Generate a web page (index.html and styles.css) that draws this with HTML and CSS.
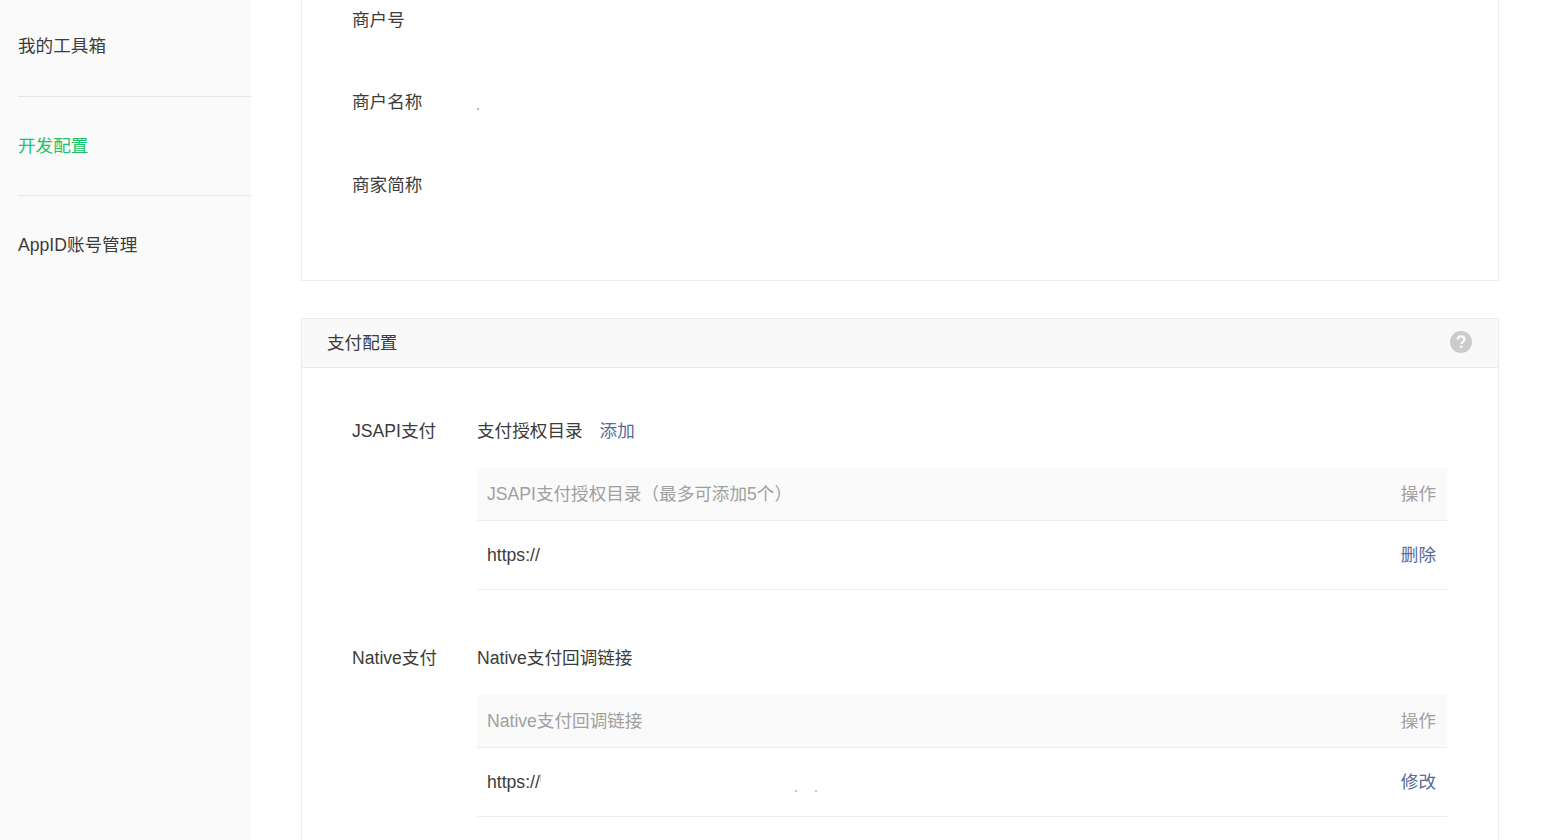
FILE: index.html
```html
<!DOCTYPE html>
<html lang="zh-CN">
<head>
  <meta charset="UTF-8">
  <title>开发配置</title>
  <link rel="stylesheet" href="styles.css">
</head>
<body>
<div class="page">
  <div class="sidebar">
    <a class="nav-item nav-first">我的工具箱</a>
    <a class="nav-item nav-active">开发配置</a>
    <a class="nav-item nav-last">AppID账号管理</a>
  </div>

  <div class="main">
    <div class="card card-merchant">
      <div class="info-row"><span class="info-label">商户号</span></div>
      <div class="info-row"><span class="info-label">商户名称</span><span class="info-dot"></span></div>
      <div class="info-row"><span class="info-label">商家简称</span></div>
    </div>

    <div class="card card-pay">
      <div class="card-head">
        <span class="card-title">支付配置</span>
        <svg class="help-icon" width="22" height="22" viewBox="0 0 22 22">
          <circle cx="11" cy="11" r="11" fill="#cbcbcb"/>
          <path d="M7.7 8.6c0-2 1.4-3.2 3.4-3.2 1.9 0 3.3 1.1 3.3 2.9 0 1.3-.7 2-1.6 2.7-.8.6-1.1 1-1.1 2" fill="none" stroke="#fff" stroke-width="2.2"/>
          <rect x="10.2" y="14.6" width="2.2" height="2.3" fill="#fff"/>
        </svg>
      </div>

      <div class="pay-section">
        <div class="pay-label">JSAPI支付</div>
        <div class="pay-body">
          <div class="pay-title">支付授权目录<a class="link link-add">添加</a></div>
          <div class="table-head"><span>JSAPI支付授权目录（最多可添加5个）</span><span>操作</span></div>
          <div class="table-row"><span class="row-url">https://</span><a class="link">删除</a></div>
        </div>
      </div>

      <div class="pay-section">
        <div class="pay-label">Native支付</div>
        <div class="pay-body">
          <div class="pay-title">Native支付回调链接</div>
          <div class="table-head"><span>Native支付回调链接</span><span>操作</span></div>
          <div class="table-row">
            <span class="row-url">https://</span>
            <i class="speck speck-a"></i><i class="speck speck-b"></i><i class="speck speck-c"></i>
            <a class="link">修改</a>
          </div>
        </div>
      </div>
    </div>
  </div>
</div>
</body>
</html>
```

FILE: styles.css
```css
html, body {
  margin: 0;
  height: 840px;
  overflow: hidden;
  background: #fff;
}
body {
  font-family: "Liberation Sans", "Noto Sans CJK SC", sans-serif;
  font-size: 17.6px;
  color: #3c3c3c;
}
a { text-decoration: none; }

.page {
  display: flex;
  height: 840px;
  overflow: hidden;
}

/* left menu */
.sidebar {
  width: 251px;
  flex-shrink: 0;
  background: #fafafa;
  padding-left: 18px;
  box-sizing: border-box;
}
.nav-item {
  display: flex;
  align-items: center;
  box-sizing: border-box;
  height: 99px;
  padding-bottom: 4px;
  border-bottom: 1px solid #e6e6e6;
}
.nav-first {
  height: 97px;
  padding-bottom: 7px;
}
.nav-active { color: #1ec26a; }
.nav-last { border-bottom: none; }

/* cards */
.main {
  width: 1198px;
  margin-left: 50px;
}
.card {
  border: 1px solid #ebebeb;
  box-sizing: border-box;
}
.card-merchant {
  border-top: none;
  height: 281px;
  padding-left: 50px;
  margin-bottom: 37px;
}
.info-row {
  display: flex;
  align-items: center;
  height: 82.5px;
  position: relative;
  top: -23px;
}
.info-label { width: 125px; }
.info-dot {
  width: 2px;
  height: 2px;
  background: #b5b5b5;
  margin-top: 16px;
}

.card-pay {
  border-bottom: none;
  height: 560px;
}
.card-head {
  display: flex;
  justify-content: space-between;
  align-items: center;
  height: 46px;
  padding: 0 26px 2px 25px;
  background: #f9f9f9;
  border-bottom: 1px solid #ebebeb;
}
.card-title { margin-bottom: 2px; }
.help-icon { display: block; }

.pay-section {
  display: flex;
  padding: 0 51px 0 50px;
  height: 227px;
}
.pay-label {
  width: 125px;
  padding-top: 51px;
  line-height: 25px;
}
.pay-body {
  flex: 1;
  padding-top: 51px;
}
.pay-title {
  line-height: 25px;
  margin-bottom: 24px;
}
.link { color: #576b95; }
.link-add { margin-left: 17px; }

.table-head, .table-row {
  display: flex;
  justify-content: space-between;
  align-items: center;
  padding: 0 11px 4px 10px;
  border-bottom: 1px solid #ededed;
}
.table-head {
  height: 48px;
  background: #fafafa;
  color: #a0a0a0;
}
.table-row {
  height: 64px;
  position: relative;
}
.row-url { margin-top: 4px; }
.speck {
  position: absolute;
  width: 2px;
  height: 2px;
  background: #c4c4c4;
  top: 42px;
}
.speck-a { left: 63px; width: 1px; height: 8px; top: 26px; background: #d4d4d4; }
.speck-b { left: 318px; }
.speck-c { left: 338px; }
```
